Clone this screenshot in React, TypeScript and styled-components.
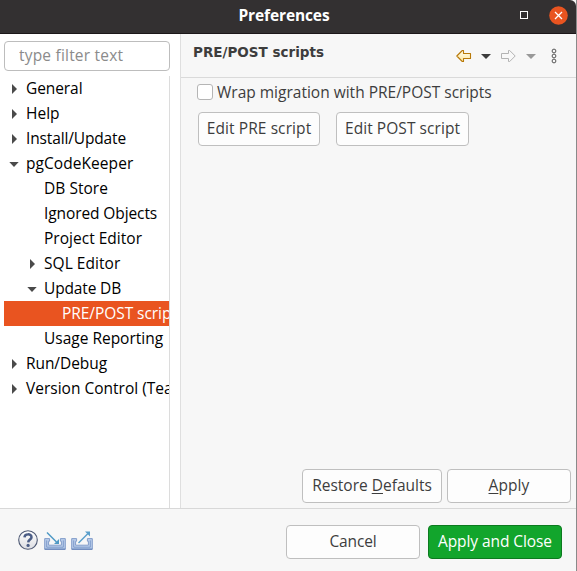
import React from "react";
import styled, { createGlobalStyle, css } from "styled-components";

const GlobalStyle = createGlobalStyle`
  * { box-sizing: border-box; }
  html, body { margin: 0; padding: 0; overflow: hidden; }
  body { font: 15.5px/25px "Open Sans", "Noto Sans", sans-serif; color: #3d3d3d; }
  button, input { font: inherit; color: inherit; margin: 0; }
  svg { display: block; flex: none; }
`;

const Window = styled.div`
  width: 577px;
  height: 571px;
  display: flex;
  flex-direction: column;
  background: #f7f7f7;
  border-right: 1px solid #8a8a8a;
  overflow: hidden;
`;

const TitleBar = styled.header`
  flex: none;
  height: 34px;
  display: grid;
  grid-template-columns: 1fr auto 1fr;
  align-items: center;
  padding: 0 8px 3px 0;
  background: #333031;
  border-bottom: 1px solid #1c1719;
  border-radius: 0 6px 0 0;
`;

const WindowTitle = styled.div`
  grid-column: 2;
  font-weight: 700;
  letter-spacing: -0.12px;
  color: #fff;
`;

const WindowControls = styled.div`
  display: flex;
  align-items: center;
  justify-content: flex-end;
  gap: 20px;
`;

const Body = styled.main`
  flex: none;
  height: 474px;
  display: flex;
`;

const Sidebar = styled.aside`
  flex: none;
  width: 181px;
  padding: 7px 10px 0 4px;
  background: #fff;
  border-right: 1px solid #dfdfdf;
  display: flex;
  flex-direction: column;
`;

const FilterInput = styled.input`
  flex: none;
  width: 166px;
  height: 30px;
  margin-bottom: 5px;
  padding: 0 0 2px 14px;
  background: #fff;
  border: 1px solid #bdbdbd;
  border-radius: 4px;
  letter-spacing: 0.2px;
  outline: none;
  &::placeholder { color: #8b8b8b; opacity: 1; }
`;

const Tree = styled.div`
  flex: 1;
  width: 166px;
  overflow: hidden;
  border-right: 1px solid #dcdcdc;
`;

const TreeRow = styled.div<{ $level: number; $selected?: boolean; $track: number }>`
  display: flex;
  align-items: center;
  height: 25px;
  width: 166px;
  padding-left: ${(p) => 4 + p.$level * 18}px;
  white-space: nowrap;
  overflow: hidden;
  letter-spacing: ${(p) => p.$track}px;
  color: ${(p) => (p.$selected ? "#fff" : "#000")};
  background: ${(p) => (p.$selected ? "#e95420" : "transparent")};
`;

const Expander = styled.span`
  flex: none;
  width: 18px;
  height: 25px;
  display: flex;
  align-items: center;
`;

const Panel = styled.section`
  flex: 1;
  display: flex;
  flex-direction: column;
`;

const PanelHeader = styled.div`
  flex: none;
  height: 44px;
  padding: 0 18px 0 12px;
  display: flex;
  justify-content: space-between;
  border-bottom: 1px solid #dadada;
`;

const PanelTitle = styled.h1`
  margin: 6px 0 0;
  font: 700 13.5px/25px "DejaVu Sans", sans-serif;
`;

const Tools = styled.div`
  display: flex;
  align-items: flex-start;
  padding-top: 14px;
`;

const Content = styled.div`
  flex: 1;
  padding: 2px 0 0 16px;
`;

const CheckLabel = styled.label`
  display: flex;
  align-items: center;
  gap: 4px;
  height: 25px;
`;

const CheckBox = styled.input.attrs({ type: "checkbox" })`
  appearance: none;
  width: 16px;
  height: 16px;
  background: #fff;
  border: 1px solid #b5b5b5;
  border-radius: 3px;
  && { margin-top: -1px; }
`;

const ButtonRow = styled.div<{ $gap: number }>`
  display: flex;
  gap: ${(p) => p.$gap}px;
`;

const ScriptButtons = styled(ButtonRow)`
  padding: 7px 0 0 1px;
`;

const PageButtons = styled(ButtonRow)`
  flex: none;
  justify-content: flex-end;
  padding: 0 5px 5px 0;
`;

const Button = styled.button<{ $width: number; $track?: number; $primary?: boolean }>`
  width: ${(p) => p.$width}px;
  height: 34px;
  padding: 0 0 2px;
  background: #fdfdfd;
  border: 1px solid #bfbfbf;
  border-radius: 4px;
  text-align: center;
  white-space: nowrap;
  letter-spacing: ${(p) => p.$track ?? 0}px;
  ${(p) =>
    p.$primary &&
    css`
      color: #fff;
      background: #12a52c;
      border-color: #0c7a1f;
    `}
`;

const Mnemonic = styled.span`
  text-decoration: underline;
  text-decoration-thickness: 1px;
  text-underline-offset: 2px;
`;

const Footer = styled.footer`
  flex: 1;
  display: flex;
  justify-content: space-between;
  align-items: flex-start;
  padding: 16px 14px 0 18px;
  border-top: 1px solid #d8d8d8;
`;

const FooterIcons = styled.div`
  display: grid;
  grid-template-columns: 26px 27px 22px;
  padding-top: 5px;
`;

const MaximizeIcon = () => (
  <svg width="10" height="10" viewBox="0 0 10 10">
    <rect x="1.5" y="1.5" width="7" height="7" fill="none" stroke="#fff" />
  </svg>
);

const CloseIcon = () => (
  <svg width="19" height="19" viewBox="0 0 19 19">
    <circle cx="9.5" cy="9.5" r="9.3" fill="#e95420" />
    <path d="M6 6l7 7M13 6l-7 7" stroke="#fff" strokeWidth="1.3" />
  </svg>
);

const RightCaret = () => (
  <svg width="18" height="25" viewBox="0 0 18 25">
    <path d="M4 8v10l5-5z" fill="#4a4a4a" />
  </svg>
);

const DownCaret = () => (
  <svg width="18" height="25" viewBox="0 0 18 25">
    <path d="M1.3 11h9.4l-4.7 5z" fill="#4a4a4a" />
  </svg>
);

const BackIcon = () => (
  <svg width="25" height="16" viewBox="0 0 25 16">
    <defs>
      <linearGradient id="gold" x1="0" y1="0" x2="0" y2="1">
        <stop offset="0" stopColor="#fffdec" />
        <stop offset="1" stopColor="#ffe7a0" />
      </linearGradient>
    </defs>
    <path d="M.8 8L6.3 2.5H7.5V5.5H14.5V10.5H7.5V13.5H6.3Z" fill="url(#gold)" stroke="#b87909" strokeWidth="1.1" strokeLinejoin="round" />
  </svg>
);

const ForwardIcon = () => (
  <svg width="25" height="16" viewBox="0 0 25 16">
    <path d="M14.2 8L8.7 2.5H7.5V5.5H.5V10.5H7.5V13.5H8.7Z" fill="#f8f8f8" stroke="#b3b3b3" strokeLinejoin="round" />
  </svg>
);

const MenuCaret = ({ color, width }: { color: string; width: number }) => (
  <svg width={width} height="16" viewBox={`0 0 ${width} 16`}>
    <path d="M0 6h10l-5 5z" fill={color} />
  </svg>
);

const DotsIcon = () => (
  <svg width="8" height="16" viewBox="0 0 8 16">
    <g fill="none" stroke="#565656" strokeWidth="1">
      <circle cx="4" cy="3" r="1.9" />
      <circle cx="4" cy="8" r="1.9" />
      <circle cx="4" cy="13" r="1.9" />
    </g>
  </svg>
);

const HelpIcon = () => (
  <svg width="20" height="20" viewBox="0 0 20 20">
    <defs>
      <linearGradient id="helpFill" x1="0" y1="0" x2="0" y2="1">
        <stop offset="0" stopColor="#fff" />
        <stop offset="1" stopColor="#dcdde2" />
      </linearGradient>
    </defs>
    <circle cx="10" cy="10" r="9.3" fill="url(#helpFill)" stroke="#4e5974" strokeWidth="1.1" />
    <path d="M6.5 7.4C6.6 3.4 13.5 3.4 13.5 7.2C13.5 9.5 10.3 9.5 10.2 12.4" fill="none" stroke="#4b5d86" strokeWidth="2.5" />
    <circle cx="10.1" cy="15.4" r="1.6" fill="#4b5d86" />
  </svg>
);

const TrayIcon = ({ outward }: { outward?: boolean }) => (
  <svg width="22" height="20" viewBox="0 0 22 20">
    <path d="M.7 8.6H5.6V11.2H4.6V15.2H17.4V11.2H16.4V8.6H21.3V19.2H.7Z" fill="#b9cdea" stroke="#839dca" strokeWidth="1" />
    <path d="M2.7 10.4V17.2H19.3V10.4" fill="none" stroke="#7f9bcb" strokeWidth="1" />
    <path d="M.7 19.2H21.3" stroke="#5f7db6" strokeWidth="1" />
    {outward ? (
      <g>
        <path d="M7.5 13L17 3.5" stroke="#5a9fcb" strokeWidth="1.5" />
        <path d="M14 1.5H19V6.5Z" fill="#5a9fcb" />
      </g>
    ) : (
      <g>
        <path d="M3 2.5L12.5 12" stroke="#4f99c5" strokeWidth="1.5" />
        <path d="M15 9V14H10Z" fill="#4f99c5" />
      </g>
    )}
  </svg>
);

type Item = { label: string; level: number; state?: "open" | "closed"; track: number; selected?: boolean };

const items: Item[] = [
  { label: "General", level: 0, state: "closed", track: -0.08 },
  { label: "Help", level: 0, state: "closed", track: 0 },
  { label: "Install/Update", level: 0, state: "closed", track: -0.14 },
  { label: "pgCodeKeeper", level: 0, state: "open", track: 0.06 },
  { label: "DB Store", level: 1, track: 0.04 },
  { label: "Ignored Objects", level: 1, track: -0.1 },
  { label: "Project Editor", level: 1, track: 0.02 },
  { label: "SQL Editor", level: 1, state: "closed", track: 0.05 },
  { label: "Update DB", level: 1, state: "open", track: -0.15 },
  { label: "PRE/POST scripts", level: 2, track: -0.06, selected: true },
  { label: "Usage Reporting", level: 1, track: -0.01 },
  { label: "Run/Debug", level: 0, state: "closed", track: -0.07 },
  { label: "Version Control (Team)", level: 0, state: "closed", track: 0 },
];

export default function App() {
  return (
    <Window>
      <GlobalStyle />
      <TitleBar>
        <WindowTitle>Preferences</WindowTitle>
        <WindowControls>
          <MaximizeIcon />
          <CloseIcon />
        </WindowControls>
      </TitleBar>
      <Body>
        <Sidebar>
          <FilterInput placeholder="type filter text" />
          <Tree>
            {items.map((item) => (
              <TreeRow key={item.label} $level={item.level} $track={item.track} $selected={item.selected}>
                <Expander>
                  {item.state === "closed" && <RightCaret />}
                  {item.state === "open" && <DownCaret />}
                </Expander>
                {item.label}
              </TreeRow>
            ))}
          </Tree>
        </Sidebar>
        <Panel>
          <PanelHeader>
            <PanelTitle>PRE/POST scripts</PanelTitle>
            <Tools>
              <BackIcon />
              <MenuCaret color="#3d3d3d" width={20} />
              <ForwardIcon />
              <MenuCaret color="#999" width={24} />
              <DotsIcon />
            </Tools>
          </PanelHeader>
          <Content>
            <CheckLabel>
              <CheckBox />
              Wrap migration with PRE/POST scripts
            </CheckLabel>
            <ScriptButtons $gap={16}>
              <Button $width={122} $track={0.09}>Edit PRE script</Button>
              <Button $width={133} $track={0.06}>Edit POST script</Button>
            </ScriptButtons>
          </Content>
          <PageButtons $gap={5}>
            <Button $width={140}>
              Restore <Mnemonic>D</Mnemonic>efaults
            </Button>
            <Button $width={124} $track={0.1}>
              <Mnemonic>A</Mnemonic>pply
            </Button>
          </PageButtons>
        </Panel>
      </Body>
      <Footer>
        <FooterIcons>
          <HelpIcon />
          <TrayIcon />
          <TrayIcon outward />
        </FooterIcons>
        <ButtonRow $gap={8}>
          <Button $width={134} $track={-0.15}>Cancel</Button>
          <Button $width={134} $track={-0.08} $primary>Apply and Close</Button>
        </ButtonRow>
      </Footer>
    </Window>
  );
}
